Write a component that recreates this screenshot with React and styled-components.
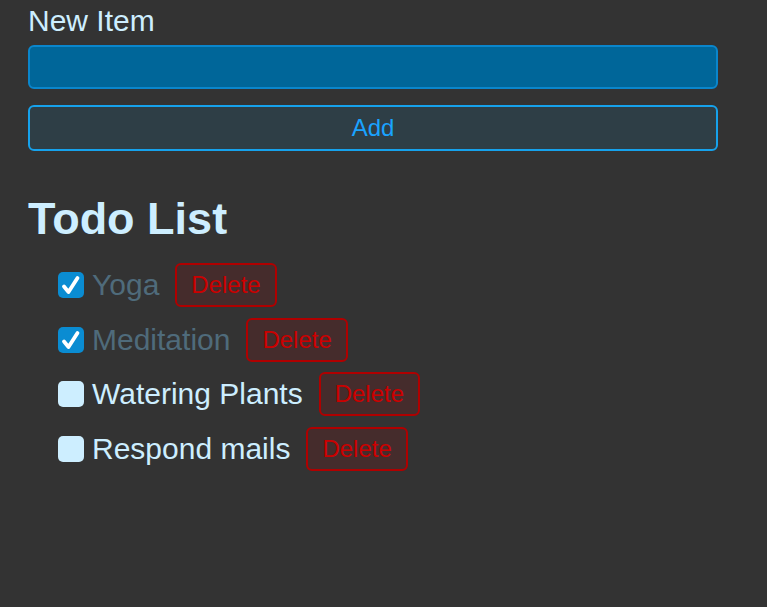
import React, { useState } from 'react';
import styled, { createGlobalStyle } from 'styled-components';

const GlobalStyle = createGlobalStyle`
  html, body {
    margin: 0;
    padding: 0;
    background: #333333;
    font-family: 'Liberation Sans', Arial, sans-serif;
  }
`;

const Page = styled.div`
  padding: 4px 28px 0 28px;
  width: 690px;
  color: #cdeeff;
`;

const Form = styled.form`
  display: flex;
  flex-direction: column;
`;

const Label = styled.label`
  font-size: 30px;
  line-height: 34px;
  margin-bottom: 7px;
`;

const Input = styled.input`
  box-sizing: border-box;
  height: 44px;
  width: 100%;
  background: #006699;
  border: 2px solid #0a86cc;
  border-radius: 6px;
  color: #cdeeff;
  font-size: 24px;
  font-family: inherit;
  outline: none;
`;

const AddButton = styled.button`
  box-sizing: border-box;
  margin-top: 16px;
  height: 46px;
  width: 100%;
  background: #2e3e46;
  border: 2px solid #16a2ec;
  border-radius: 6px;
  color: #1aa3ff;
  font-size: 24px;
  font-family: inherit;
  cursor: pointer;
`;

const Heading = styled.h1`
  margin: 42px 0 19px 0;
  font-size: 45px;
  line-height: 51px;
  font-weight: bold;
  color: #cdeeff;
`;

const List = styled.ul`
  list-style: none;
  margin: 0;
  padding: 0 0 0 30px;
  display: flex;
  flex-direction: column;
  gap: 10.5px;
`;

const Row = styled.li`
  display: flex;
  align-items: center;
  height: 44px;
`;

const Box = styled.span`
  box-sizing: border-box;
  width: 26px;
  height: 26px;
  border-radius: 5px;
  background: ${p => (p.$checked ? '#0a8cd2' : '#cdeeff')};
  display: flex;
  align-items: center;
  justify-content: center;
  flex: none;
  cursor: pointer;
`;

const ItemText = styled.span`
  margin-left: 8px;
  font-size: 30px;
  color: ${p => (p.$checked ? '#4f6b7b' : '#cdeeff')};
`;

const DeleteButton = styled.button`
  box-sizing: border-box;
  margin-left: 16px;
  height: 44px;
  padding: 0 14px;
  background: #452c2c;
  border: 2px solid #b00000;
  border-radius: 6px;
  color: #cc0000;
  font-size: 24px;
  font-family: inherit;
  cursor: pointer;
`;

const Check = () => (
  <svg width="26" height="26" viewBox="0 0 26 26">
    <path
      d="M6 14.5 L10.5 20 L19.5 6"
      fill="none"
      stroke="#ffffff"
      strokeWidth="3.8"
      strokeLinecap="round"
      strokeLinejoin="round"
    />
  </svg>
);

const initialTodos = [
  { id: 1, title: 'Yoga', done: true },
  { id: 2, title: 'Meditation', done: true },
  { id: 3, title: 'Watering Plants', done: false },
  { id: 4, title: 'Respond mails', done: false },
];

export default function App() {
  const [todos, setTodos] = useState(initialTodos);
  const [novo, setNovo] = useState('');

  const adicionar = e => {
    e.preventDefault();
    if (!novo.trim()) return;
    setTodos([...todos, { id: Date.now(), title: novo, done: false }]);
    setNovo('');
  };

  const alternar = id =>
    setTodos(todos.map(t => (t.id === id ? { ...t, done: !t.done } : t)));

  const remover = id => setTodos(todos.filter(t => t.id !== id));

  return (
    <Page>
      <GlobalStyle />
      <Form onSubmit={adicionar}>
        <Label htmlFor="item">New Item</Label>
        <Input id="item" value={novo} onChange={e => setNovo(e.target.value)} />
        <AddButton type="submit">Add</AddButton>
      </Form>
      <Heading>Todo List</Heading>
      <List>
        {todos.map(todo => (
          <Row key={todo.id}>
            <Box $checked={todo.done} onClick={() => alternar(todo.id)}>
              {todo.done && <Check />}
            </Box>
            <ItemText $checked={todo.done}>{todo.title}</ItemText>
            <DeleteButton onClick={() => remover(todo.id)}>Delete</DeleteButton>
          </Row>
        ))}
      </List>
    </Page>
  );
}
